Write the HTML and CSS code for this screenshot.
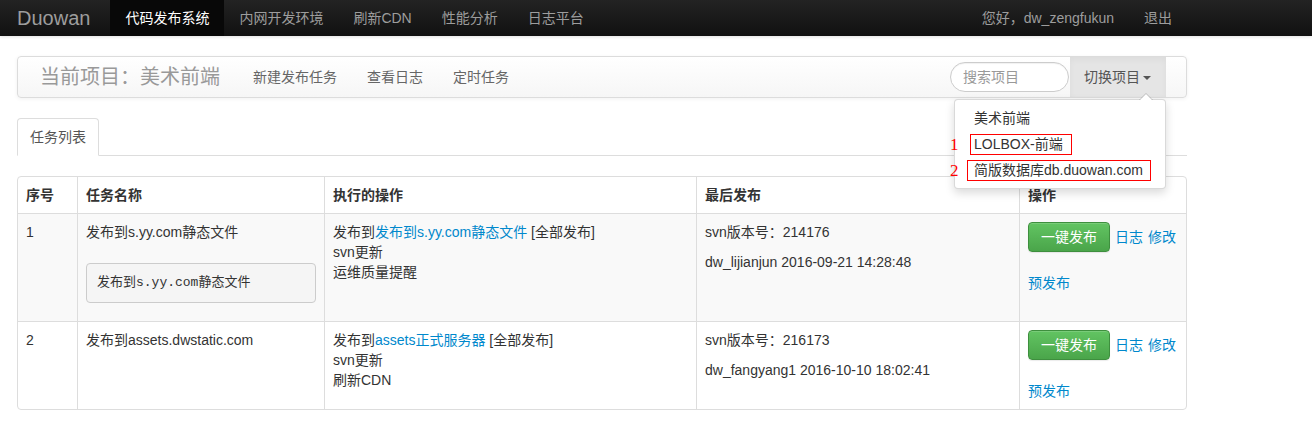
FILE: index.html
```html
<!DOCTYPE html>
<html lang="zh-CN">
<head>
<meta charset="utf-8">
<title>代码发布系统</title>
<link rel="stylesheet" href="styles.css">
</head>
<body>
<div class="topbar">
  <div class="wrap topbar-inner">
    <a class="brand" href="#">Duowan</a>
    <ul class="topnav">
      <li class="active"><a href="#">代码发布系统</a></li>
      <li><a href="#">内网开发环境</a></li>
      <li><a href="#">刷新CDN</a></li>
      <li><a href="#">性能分析</a></li>
      <li><a href="#">日志平台</a></li>
    </ul>
    <ul class="topnav topnav-right">
      <li><a href="#">您好，dw_zengfukun</a></li>
      <li><a href="#">退出</a></li>
    </ul>
  </div>
</div>

<div class="wrap main">
  <div class="subnav">
    <span class="proj">当前项目：美术前端</span>
    <ul class="subnav-links">
      <li><a href="#">新建发布任务</a></li>
      <li><a href="#">查看日志</a></li>
      <li><a href="#">定时任务</a></li>
    </ul>
    <div class="subnav-right">
      <input class="search" type="text" placeholder="搜索项目">
      <div class="switch">
        <a class="switch-toggle" href="#">切换项目<span class="caret"></span></a>
        <ul class="menu">
          <li><a href="#">美术前端</a></li>
          <li><span class="num">1</span><a href="#"><span class="mark mark1">LOLBOX-前端</span></a></li>
          <li><span class="num">2</span><a href="#"><span class="mark mark2">简版数据库db.duowan.com</span></a></li>
        </ul>
      </div>
    </div>
  </div>

  <ul class="tabs">
    <li class="active"><a href="#">任务列表</a></li>
  </ul>

  <table class="tasks">
    <colgroup>
      <col class="c1"><col class="c2"><col class="c3"><col class="c4"><col class="c5">
    </colgroup>
    <thead>
      <tr><th>序号</th><th>任务名称</th><th>执行的操作</th><th>最后发布</th><th>操作</th></tr>
    </thead>
    <tbody>
      <tr class="odd">
        <td>1</td>
        <td>
          <div>发布到s.yy.com静态文件</div>
          <pre class="code">发布到s.yy.com静态文件</pre>
        </td>
        <td>发布到<a href="#">发布到s.yy.com静态文件</a> [全部发布]<br>svn更新<br>运维质量提醒</td>
        <td>
          <p>svn版本号：214176</p>
          <p>dw_lijianjun 2016-09-21 14:28:48</p>
        </td>
        <td>
          <div class="ops-line"><a class="btn" href="#">一键发布</a><a href="#">日志</a><a href="#">修改</a></div>
          <div class="ops-pre"><a href="#">预发布</a></div>
        </td>
      </tr>
      <tr>
        <td>2</td>
        <td><div>发布到assets.dwstatic.com</div></td>
        <td>发布到<a href="#">assets正式服务器</a> [全部发布]<br>svn更新<br>刷新CDN</td>
        <td>
          <p>svn版本号：216173</p>
          <p>dw_fangyang1 2016-10-10 18:02:41</p>
        </td>
        <td>
          <div class="ops-line"><a class="btn" href="#">一键发布</a><a href="#">日志</a><a href="#">修改</a></div>
          <div class="ops-pre"><a href="#">预发布</a></div>
        </td>
      </tr>
    </tbody>
  </table>
</div>
</body>
</html>
```

FILE: styles.css
```css
* { box-sizing: border-box; }

body {
  margin: 0;
  background: #fff;
  color: #333;
  font-family: "Liberation Sans", "Noto Sans CJK SC", sans-serif;
  font-size: 14px;
  line-height: 20px;
}

a { color: #0088cc; text-decoration: none; }
ul { list-style: none; margin: 0; padding: 0; }

.wrap {
  width: 1170px;
  margin-left: 17px;
}

/* top bar */
.topbar {
  height: 36px;
  background: linear-gradient(#232323, #111);
  box-shadow: 0 1px 3px rgba(0,0,0,.12);
}
.topbar-inner {
  display: flex;
  align-items: stretch;
  height: 36px;
}
.brand {
  color: #9d9d9d;
  font-size: 20px;
  line-height: 36px;
  margin-right: 20px;
}
.topnav { display: flex; }
.topnav a {
  display: block;
  padding: 8px 15px;
  color: #9d9d9d;
  line-height: 20px;
}
.topnav .active a {
  background: #080808;
  color: #fff;
}
.topnav-right { margin-left: auto; }
.topnav-right li:last-child a { padding-right: 15px; }

/* sub nav */
.subnav {
  margin-top: 20px;
  height: 42px;
  border: 1px solid #dcdcdc;
  border-radius: 4px;
  background: linear-gradient(#fff, #f6f6f6);
  box-shadow: 0 1px 4px rgba(0,0,0,.06);
  display: flex;
  align-items: center;
  position: relative;
}
.proj {
  padding-left: 22px;
  margin-right: 18px;
  font-size: 20px;
  color: #999;
}
.subnav-links { display: flex; }
.subnav-links a {
  display: block;
  padding: 0 15px;
  color: #666;
}
.subnav-right {
  margin-left: auto;
  margin-right: 20px;
  display: flex;
  align-items: center;
  height: 40px;
}
.search {
  width: 119px;
  height: 30px;
  border: 1px solid #ccc;
  border-radius: 15px;
  padding: 0 12px;
  font: inherit;
  color: #555;
  background: #fff;
  box-shadow: inset 0 1px 1px rgba(0,0,0,.06);
  outline: none;
}
.search::placeholder { color: #999; }
.switch {
  position: relative;
  height: 40px;
  margin-left: 1px;
}
.switch-toggle {
  display: block;
  height: 40px;
  line-height: 40px;
  padding: 0 15px 0 14px;
  background: #e5e5e5;
  color: #555;
  box-shadow: inset 0 3px 6px rgba(0,0,0,.04);
}
.caret {
  display: inline-block;
  width: 0;
  height: 0;
  margin-left: 3px;
  vertical-align: middle;
  border-top: 4px solid #555;
  border-left: 4px solid transparent;
  border-right: 4px solid transparent;
}

/* dropdown */
.menu {
  position: absolute;
  top: 42px;
  right: 0;
  width: 212px;
  padding: 5px 0;
  background: #fff;
  border: 1px solid rgba(0,0,0,.15);
  border-radius: 4px;
  box-shadow: 0 4px 10px rgba(0,0,0,.15);
  z-index: 10;
}
.menu::before {
  content: "";
  position: absolute;
  top: -7px;
  right: 12px;
  border-left: 7px solid transparent;
  border-right: 7px solid transparent;
  border-bottom: 7px solid rgba(0,0,0,.18);
}
.menu::after {
  content: "";
  position: absolute;
  top: -6px;
  right: 13px;
  border-left: 6px solid transparent;
  border-right: 6px solid transparent;
  border-bottom: 6px solid #fff;
}
.menu li {
  position: relative;
  height: 26px;
}
.menu a {
  display: block;
  padding: 3px 20px 3px 19px;
  color: #333;
  white-space: nowrap;
}
.mark {
  display: inline-block;
  border: 1px solid #f00;
  line-height: 19px;
  margin-top: -1px;
  margin-left: -4px;
  padding: 0 0 0 3px;
}
.mark1 { width: 102px; }
.mark2 { width: 184px; margin-left: -7px; padding-left: 6px; }
.num {
  position: absolute;
  left: -5px;
  top: 4px;
  color: #f00;
  font-family: "Liberation Serif", serif;
  font-size: 17px;
  line-height: 20px;
}

/* tabs */
.tabs {
  margin-top: 20px;
  display: flex;
  border-bottom: 1px solid #ddd;
}
.tabs li { margin-bottom: -1px; }
.tabs a {
  display: block;
  padding: 8px 12px;
  line-height: 20px;
  color: #555;
  background: #fff;
  border: 1px solid #ddd;
  border-bottom-color: #fff;
  border-radius: 4px 4px 0 0;
}

/* table */
.tasks {
  margin-top: 20px;
  width: 1170px;
  table-layout: fixed;
  border-collapse: separate;
  border-spacing: 0;
  border: 1px solid #ddd;
  border-radius: 4px;
}
.c1 { width: 59px; }
.c2 { width: 247px; }
.c3 { width: 372px; }
.c4 { width: 323px; }
.c5 { width: 167px; }
.tasks th,
.tasks td {
  padding: 8px;
  line-height: 20px;
  text-align: left;
  vertical-align: top;
  border-left: 1px solid #ddd;
}
.tasks th:first-child,
.tasks td:first-child { border-left: 0; }
.tasks th { font-weight: bold; color: #333; }
.tasks td { border-top: 1px solid #ddd; }
.tasks tr.odd td { background: #f9f9f9; }
.tasks p { margin: 0 0 10px; }

.code {
  margin: 21px 0 10px;
  padding: 9px 10px;
  font-family: "Liberation Mono", "Noto Sans CJK SC", monospace;
  font-size: 13px;
  line-height: 20px;
  color: #333;
  background: #f5f5f5;
  border: 1px solid #ccc;
  border-radius: 4px;
}

.ops-line {
  display: flex;
  align-items: center;
  gap: 5px;
}
.btn {
  display: inline-block;
  padding: 5px 12px;
  line-height: 18px;
  color: #fff;
  border: 1px solid #3e8f3e;
  border-radius: 4px;
  background: linear-gradient(#62c462, #4aa54a);
  box-shadow: inset 0 1px 0 rgba(255,255,255,.15), 0 1px 1px rgba(0,0,0,.08);
}
.ops-pre { margin-top: 21px; }
```
